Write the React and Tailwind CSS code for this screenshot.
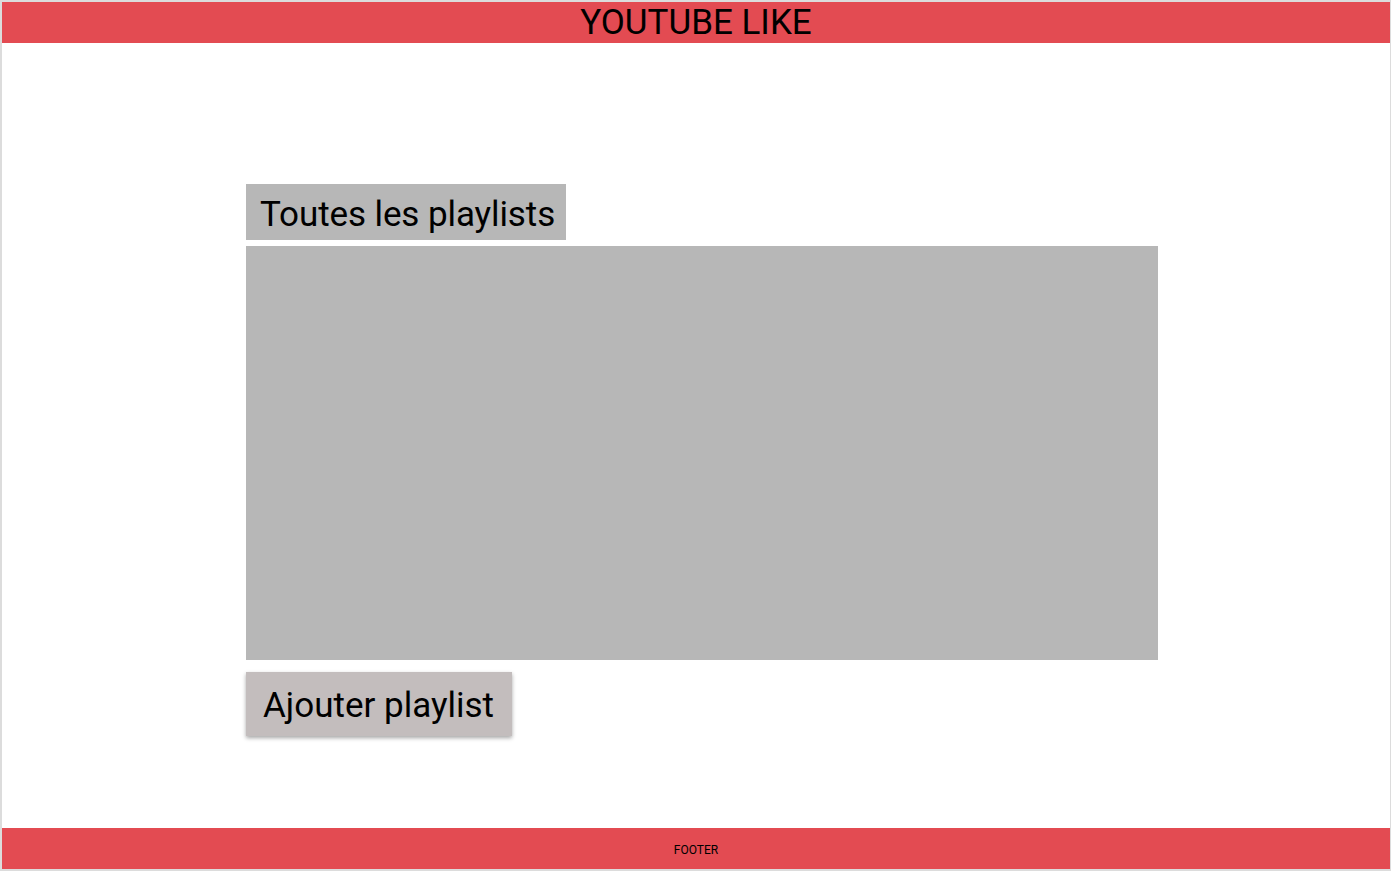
import React from 'react';

const App = () => {
  return (
    <div
      className="h-[871px] w-[1391px] flex flex-col bg-white border-t-2 border-l-2 border-b-2 border-r border-[#dcdcdc] text-black"
      style={{ fontFamily: 'Roboto, "Noto Sans", sans-serif' }}
    >
      {/* Header */}
      <header className="h-[41px] shrink-0 flex items-center justify-center bg-[#e34b52]">
        <h1 className="text-[35px] leading-none">YOUTUBE LIKE</h1>
      </header>

      {/* Content */}
      <main className="flex-1 pl-[244px] pt-[141px]">
        <div className="w-[320px] h-[56px] flex items-center pl-[14px] pt-[4px] bg-[#b7b7b7]">
          <h2 className="text-[35px] leading-none tracking-[-0.1px]">Toutes les playlists</h2>
        </div>

        <div className="mt-[6px] w-[912px] h-[414px] bg-[#b7b7b7]" />

        <button
          type="button"
          className="mt-[12px] w-[266px] h-[64px] flex items-center pl-[17px] pt-[2px] bg-[#c3bdbd] text-[35px] leading-none shadow-[0_2px_4px_rgba(0,0,0,0.35)]"
        >
          Ajouter playlist
        </button>
      </main>

      {/* Footer */}
      <footer className="h-[41px] shrink-0 flex items-center justify-center pt-[2px] bg-[#e34b52]">
        <span className="text-[12px] leading-none">FOOTER</span>
      </footer>
    </div>
  );
};

export default App;
